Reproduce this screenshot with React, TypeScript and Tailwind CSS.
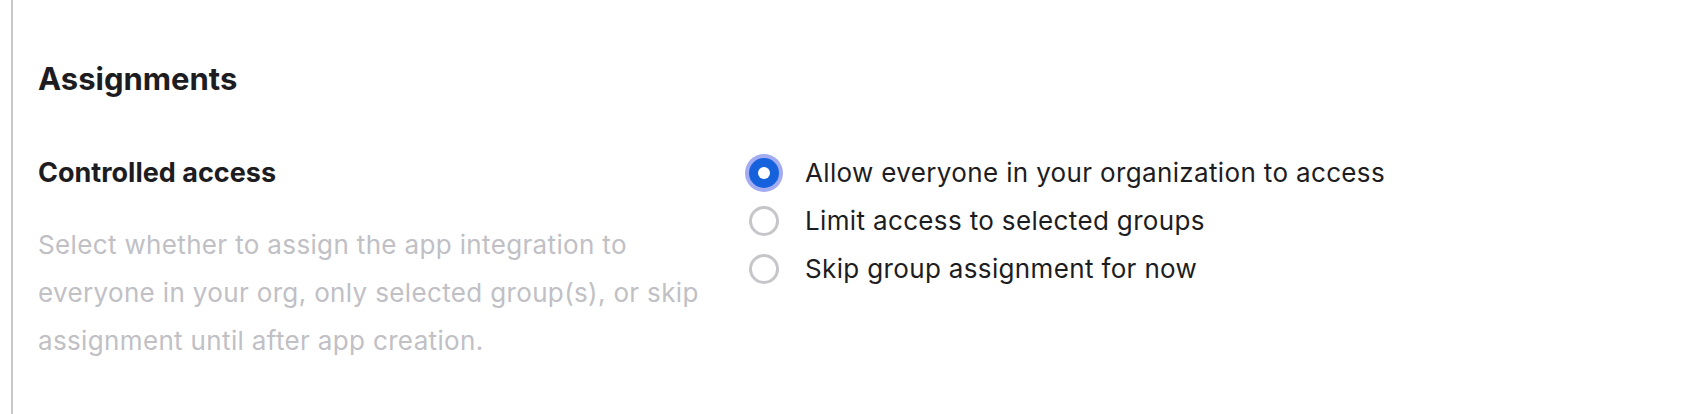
import { useState } from 'react';

const OPTIONS = [
  { id: 'everyone', label: 'Allow everyone in your organization to access' },
  { id: 'groups', label: 'Limit access to selected groups' },
  { id: 'skip', label: 'Skip group assignment for now' },
];

function Radio({ checked }: { checked: boolean }) {
  if (checked) {
    return (
      <span className="w-[30px] h-[30px] rounded-full bg-[#1662dd] shadow-[0_0_0_4px_#a3acf0] flex items-center justify-center shrink-0">
        <span className="w-[12px] h-[12px] rounded-full bg-white" />
      </span>
    );
  }
  return (
    <span className="w-[30px] h-[30px] rounded-full border-[3px] border-[#c6c6ca] bg-white shrink-0" />
  );
}

export default function App() {
  const [access, setAccess] = useState('everyone');

  return (
    <div
      className="h-[414px] w-full bg-white pl-[11px] text-[#1d1d21]"
      style={{ fontFamily: 'Inter, "Noto Sans", sans-serif' }}
    >
      <div className="h-full border-l-2 border-[#c8c8cb] pl-[25px] pt-[61px]">
        <h2 className="text-[31px] leading-[36px] font-bold">Assignments</h2>

        <div className="mt-[52px] flex">
          <div className="w-[711px] shrink-0 pr-[20px]">
            <h3 className="text-[27px] leading-[48px] font-bold">Controlled access</h3>
            <p className="mt-[24px] text-[26px] leading-[48px] tracking-[0.35px] text-[#c0c0c5]">
              Select whether to assign the app integration to everyone in your org, only selected
              group(s), or skip assignment until after app creation.
            </p>
          </div>

          <div className="flex flex-col">
            {OPTIONS.map((opt) => (
              <label
                key={opt.id}
                onClick={() => setAccess(opt.id)}
                className="flex items-center gap-[26px] h-[48px] text-[26px] leading-[48px] tracking-[0.35px] cursor-pointer"
              >
                <Radio checked={access === opt.id} />
                <span>{opt.label}</span>
              </label>
            ))}
          </div>
        </div>
      </div>
    </div>
  );
}
